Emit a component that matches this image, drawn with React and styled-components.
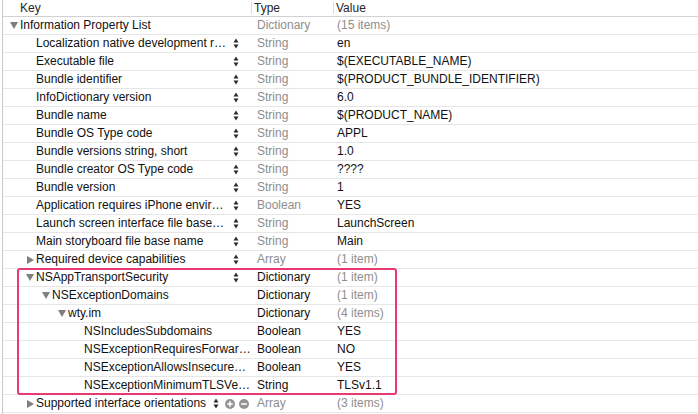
import React from 'react';
import styled, { createGlobalStyle } from 'styled-components';

const GlobalStyle = createGlobalStyle`
  html, body {
    margin: 0;
    padding: 0;
    background: #ffffff;
  }
  body {
    font-family: "Liberation Sans", Arial, sans-serif;
    font-size: 12px;
    color: #111111;
  }
`;

const Editor = styled.div`
  margin-left: 2px;
  border-left: 1px solid #c9c9c9;
  height: 414px;
  overflow: hidden;
`;

const HeaderRow = styled.div`
  display: grid;
  grid-template-columns: 248px 82px 1fr;
  height: 17px;
  box-sizing: border-box;
  border-bottom: 1px solid #d2d2d2;
  line-height: 16px;
  color: #262626;
`;

const HeaderCell = styled.div`
  padding-left: ${(p) => (p.$first ? '17px' : '2px')};
  border-left: ${(p) => (p.$first ? 'none' : '1px solid #dcdcdc')};
  height: 12px;
  margin-top: 2px;
  line-height: 12px;
`;

const Row = styled.div`
  display: grid;
  grid-template-columns: 248px 82px 1fr;
  height: 18px;
  box-sizing: border-box;
  border-bottom: 1px solid #e6e6e6;
  line-height: 17px;
`;

const KeyCell = styled.div`
  display: flex;
  align-items: center;
  min-width: 0;
  padding-left: ${(p) => 7 + p.$level * 16}px;
`;

const Disclosure = styled.span`
  flex: 0 0 10px;
  display: flex;
  align-items: center;

  &::before {
    content: '';
    display: ${(p) => (p.$dir ? 'block' : 'none')};
    width: 0;
    height: 0;
    ${(p) =>
      p.$dir === 'down'
        ? `border-left: 4px solid transparent;
           border-right: 4px solid transparent;
           border-top: 7px solid #7f7f7f;`
        : `border-top: 4px solid transparent;
           border-bottom: 4px solid transparent;
           border-left: 7px solid #7f7f7f;
           margin-left: 1px;`}
  }
`;

const KeyName = styled.span`
  white-space: nowrap;
  overflow: hidden;
  flex: ${(p) => (p.$tight ? '0 0 auto' : '1 1 auto')};
`;

const Controls = styled.span`
  display: flex;
  align-items: center;
  gap: 4px;
  margin-left: ${(p) => (p.$tight ? '7px' : 'auto')};
  margin-right: ${(p) => (p.$tight ? '0' : '12px')};
`;

const StepperIcon = styled.svg`
  display: block;
  margin-right: ${(p) => (p.$withButtons ? '2px' : '0')};
`;

const TypeCell = styled.div`
  padding-left: 6px;
  color: ${(p) => (p.$muted ? '#8e8e8e' : '#111111')};
  white-space: nowrap;
`;

const ValueCell = styled.div`
  padding-left: 4px;
  color: ${(p) => (p.$muted ? '#8e8e8e' : '#111111')};
  white-space: nowrap;
`;

const Highlight = styled.div`
  position: relative;

  &::after {
    content: '';
    position: absolute;
    top: -1px;
    bottom: 0;
    left: 14px;
    width: 380px;
    box-sizing: border-box;
    border: 2px solid #e83a6e;
    border-radius: 3px;
    pointer-events: none;
  }
`;

const Stepper = ({ withButtons }) => (
  <StepperIcon width="6" height="11" viewBox="0 0 6 11" $withButtons={withButtons}>
    <polygon points="0.5,4.5 3,0.5 5.5,4.5" fill="#2b2b2b" />
    <polygon points="0.5,6.5 3,10.5 5.5,6.5" fill="#2b2b2b" />
  </StepperIcon>
);

const RoundButton = ({ minus }) => (
  <svg width="10" height="10" viewBox="0 0 10 10">
    <circle cx="5" cy="5" r="5" fill="#939393" />
    <rect x="2.2" y="4.2" width="5.6" height="1.6" fill="#ffffff" />
    {!minus && <rect x="4.2" y="2.2" width="1.6" height="5.6" fill="#ffffff" />}
  </svg>
);

const rows = [
  { key: 'Information Property List', level: 0, dir: 'down', type: 'Dictionary', typeMuted: true, value: '(15 items)', valueMuted: true },
  { key: 'Localization native development r…', level: 1, stepper: true, type: 'String', typeMuted: true, value: 'en' },
  { key: 'Executable file', level: 1, stepper: true, type: 'String', typeMuted: true, value: '$(EXECUTABLE_NAME)' },
  { key: 'Bundle identifier', level: 1, stepper: true, type: 'String', typeMuted: true, value: '$(PRODUCT_BUNDLE_IDENTIFIER)' },
  { key: 'InfoDictionary version', level: 1, stepper: true, type: 'String', typeMuted: true, value: '6.0' },
  { key: 'Bundle name', level: 1, stepper: true, type: 'String', typeMuted: true, value: '$(PRODUCT_NAME)' },
  { key: 'Bundle OS Type code', level: 1, stepper: true, type: 'String', typeMuted: true, value: 'APPL' },
  { key: 'Bundle versions string, short', level: 1, stepper: true, type: 'String', typeMuted: true, value: '1.0' },
  { key: 'Bundle creator OS Type code', level: 1, stepper: true, type: 'String', typeMuted: true, value: '????' },
  { key: 'Bundle version', level: 1, stepper: true, type: 'String', typeMuted: true, value: '1' },
  { key: 'Application requires iPhone envir…', level: 1, stepper: true, type: 'Boolean', typeMuted: true, value: 'YES' },
  { key: 'Launch screen interface file base…', level: 1, stepper: true, type: 'String', typeMuted: true, value: 'LaunchScreen' },
  { key: 'Main storyboard file base name', level: 1, stepper: true, type: 'String', typeMuted: true, value: 'Main' },
  { key: 'Required device capabilities', level: 1, dir: 'right', stepper: true, type: 'Array', typeMuted: true, value: '(1 item)', valueMuted: true },
];

const transportRows = [
  { key: 'NSAppTransportSecurity', level: 1, dir: 'down', stepper: true, type: 'Dictionary', value: '(1 item)', valueMuted: true },
  { key: 'NSExceptionDomains', level: 2, dir: 'down', type: 'Dictionary', value: '(1 item)', valueMuted: true },
  { key: 'wty.im', level: 3, dir: 'down', type: 'Dictionary', value: '(4 items)', valueMuted: true },
  { key: 'NSIncludesSubdomains', level: 4, type: 'Boolean', value: 'YES' },
  { key: 'NSExceptionRequiresForwar…', level: 4, type: 'Boolean', value: 'NO' },
  { key: 'NSExceptionAllowsInsecure…', level: 4, type: 'Boolean', value: 'YES' },
  { key: 'NSExceptionMinimumTLSVe…', level: 4, type: 'String', value: 'TLSv1.1' },
];

const lastRow = {
  key: 'Supported interface orientations', level: 1, dir: 'right', stepper: true, buttons: true,
  type: 'Array', typeMuted: true, value: '(3 items)', valueMuted: true,
};

const PlistRow = ({ item }) => (
  <Row>
    <KeyCell $level={item.level}>
      <Disclosure $dir={item.dir} />
      <KeyName $tight={item.buttons}>{item.key}</KeyName>
      {item.stepper && (
        <Controls $tight={item.buttons}>
          <Stepper withButtons={item.buttons} />
          {item.buttons && <RoundButton />}
          {item.buttons && <RoundButton minus />}
        </Controls>
      )}
    </KeyCell>
    <TypeCell $muted={item.typeMuted}>{item.type}</TypeCell>
    <ValueCell $muted={item.valueMuted}>{item.value}</ValueCell>
  </Row>
);

export default function App() {
  return (
    <>
      <GlobalStyle />
      <Editor>
        <HeaderRow>
          <HeaderCell $first>Key</HeaderCell>
          <HeaderCell>Type</HeaderCell>
          <HeaderCell>Value</HeaderCell>
        </HeaderRow>
        {rows.map((item) => (
          <PlistRow key={item.key} item={item} />
        ))}
        <Highlight>
          {transportRows.map((item) => (
            <PlistRow key={item.key} item={item} />
          ))}
        </Highlight>
        <PlistRow item={lastRow} />
      </Editor>
    </>
  );
}
